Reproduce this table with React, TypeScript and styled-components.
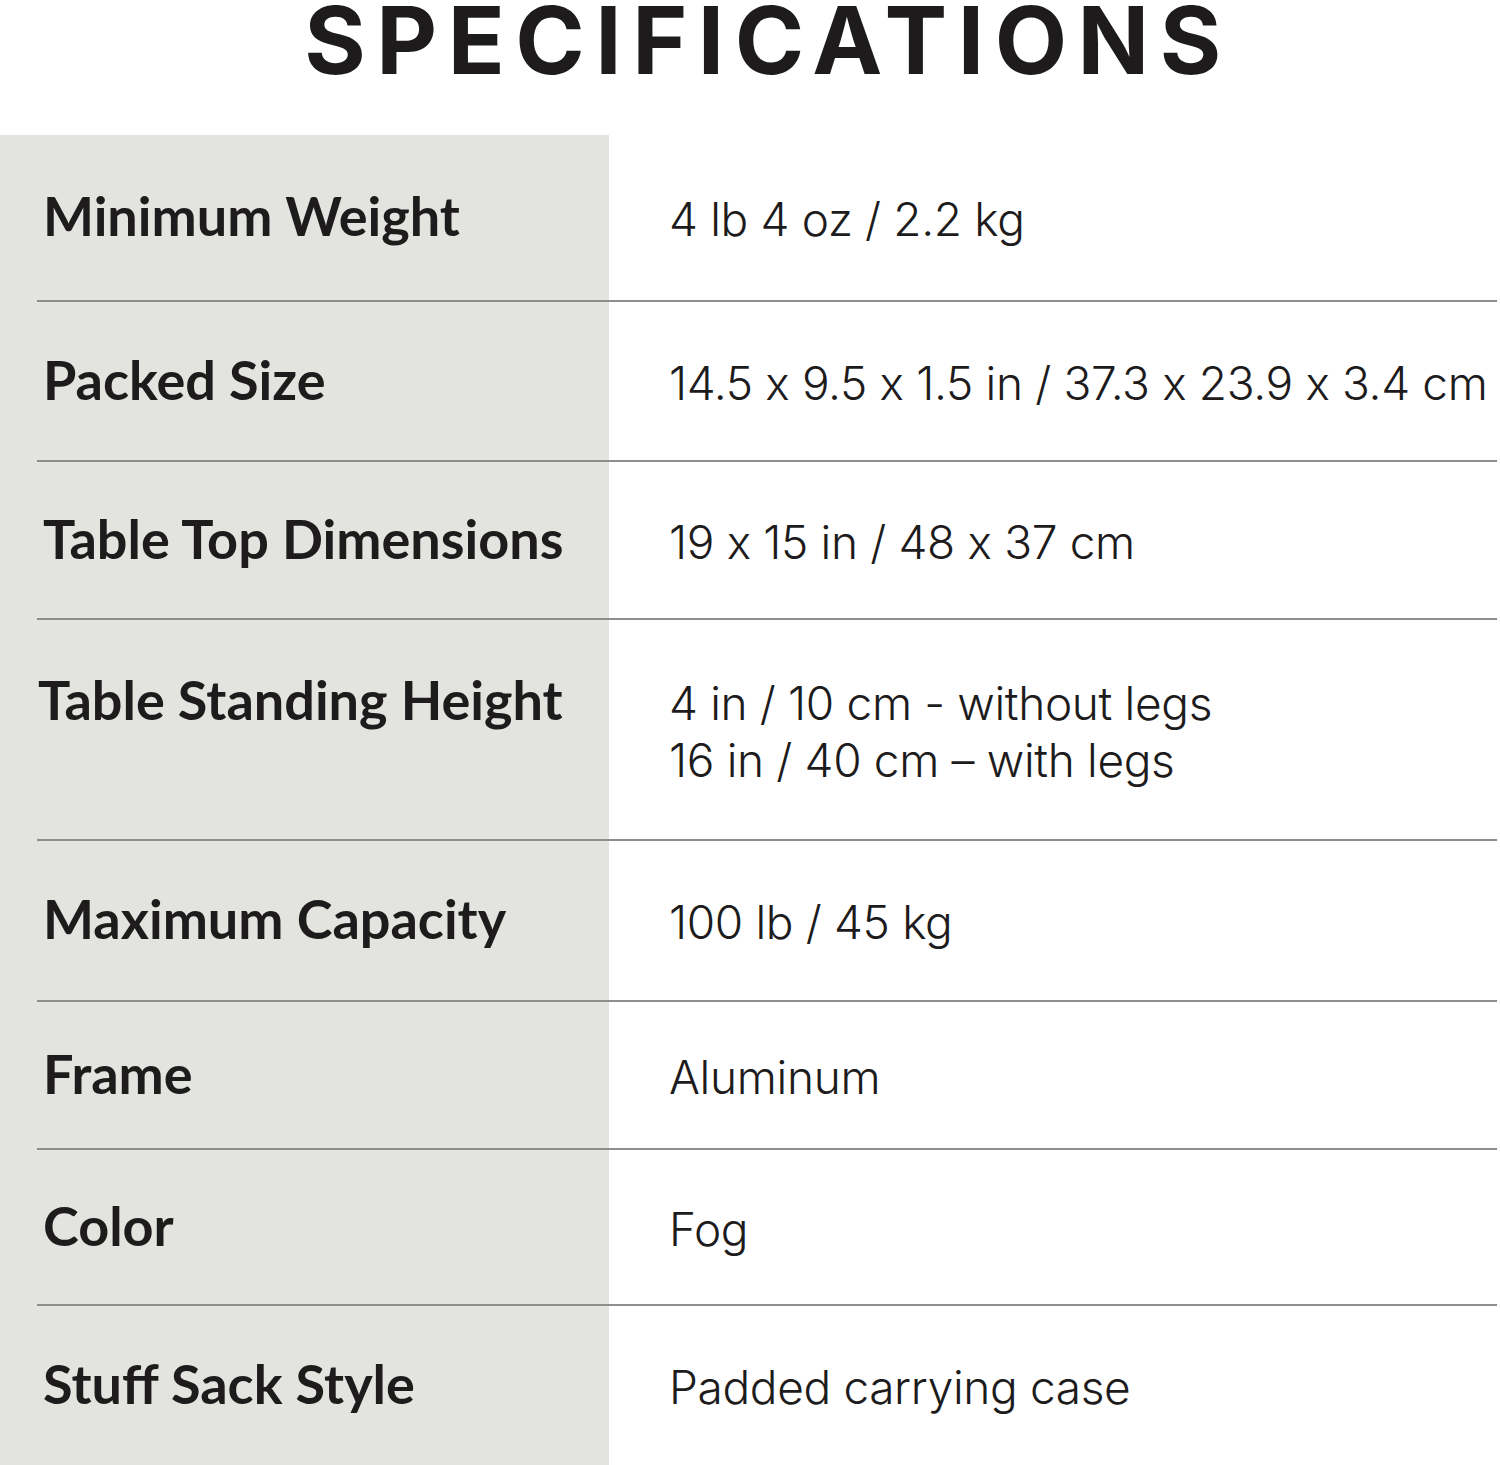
import React from "react";
import styled, { createGlobalStyle } from "styled-components";

const GlobalStyle = createGlobalStyle`
	html, body {
		margin: 0;
		padding: 0;
		background: #ffffff;
	}
	body {
		width: 1500px;
		height: 1465px;
		overflow: hidden;
		font-family: "Lato", "Liberation Sans", sans-serif;
		color: #1d1b1c;
	}
`;

const Page = styled.div`
	width: 1500px;
	display: flex;
	flex-direction: column;
`;

const Title = styled.h1`
	margin: 0;
	padding-top: 2px;
	padding-left: 36px;
	height: 135px;
	box-sizing: border-box;
	display: flex;
	justify-content: center;
	font-family: "Inter", "DejaVu Sans", sans-serif;
	font-weight: 700;
	font-size: 94px;
	line-height: 76px;
	letter-spacing: 10.5px;
	color: #1d1b1c;
`;

const Table = styled.div`
	display: flex;
	flex-direction: column;
	background: linear-gradient(to right, #e3e3df 609px, #ffffff 609px);
`;

const Row = styled.div<{ $height: number; $last?: boolean }>`
	height: ${(p) => p.$height}px;
	margin-left: 37px;
	margin-right: 3px;
	box-sizing: border-box;
	display: grid;
	grid-template-columns: 572px 1fr;
	align-items: baseline;
	align-content: center;
	border-bottom: ${(p) => (p.$last ? "none" : "2px solid #8d8d8b")};
`;

const Label = styled.div<{ $indent: number }>`
	padding-left: ${(p) => p.$indent}px;
	font-weight: 700;
	font-size: 54px;
	line-height: 57px;
	color: #1d1b1c;
`;

const Value = styled.div`
	padding-left: 60px;
	font-family: "Inter", "Lato", sans-serif;
	font-feature-settings: "calt" 0;
	font-weight: 300;
	font-size: 46px;
	line-height: 57px;
	letter-spacing: -0.35px;
	color: #1d1b1c;
	white-space: nowrap;
`;

type Spec = { label: string; value: string[]; height: number; indent?: number };

export default function App() {
	const specs: Spec[] = [
		{ label: "Minimum Weight", value: ["4 lb 4 oz / 2.2 kg"], height: 167 },
		{ label: "Packed Size", value: ["14.5 x 9.5 x 1.5 in / 37.3 x 23.9 x 3.4 cm"], height: 160 },
		{ label: "Table Top Dimensions", value: ["19 x 15 in / 48 x 37 cm"], height: 158 },
		{
			label: "Table Standing Height",
			value: ["4 in / 10 cm - without legs", "16 in / 40 cm \u2013 with legs"],
			height: 221,
			indent: 1,
		},
		{ label: "Maximum Capacity", value: ["100 lb / 45 kg"], height: 161 },
		{ label: "Frame", value: ["Aluminum"], height: 148 },
		{ label: "Color", value: ["Fog"], height: 156 },
		{ label: "Stuff Sack Style", value: ["Padded carrying case"], height: 159 },
	];

	return (
		<>
			<GlobalStyle />
			<Page>
				<Title>SPECIFICATIONS</Title>
				<Table>
					{specs.map((each, i) => (
						<Row key={i} $height={each.height} $last={i === specs.length - 1}>
							<Label $indent={each.indent ?? 6}>{each.label}</Label>
							<Value>
								{each.value.map((line, j) => (
									<div key={j}>{line}</div>
								))}
							</Value>
						</Row>
					))}
				</Table>
			</Page>
		</>
	);
}
